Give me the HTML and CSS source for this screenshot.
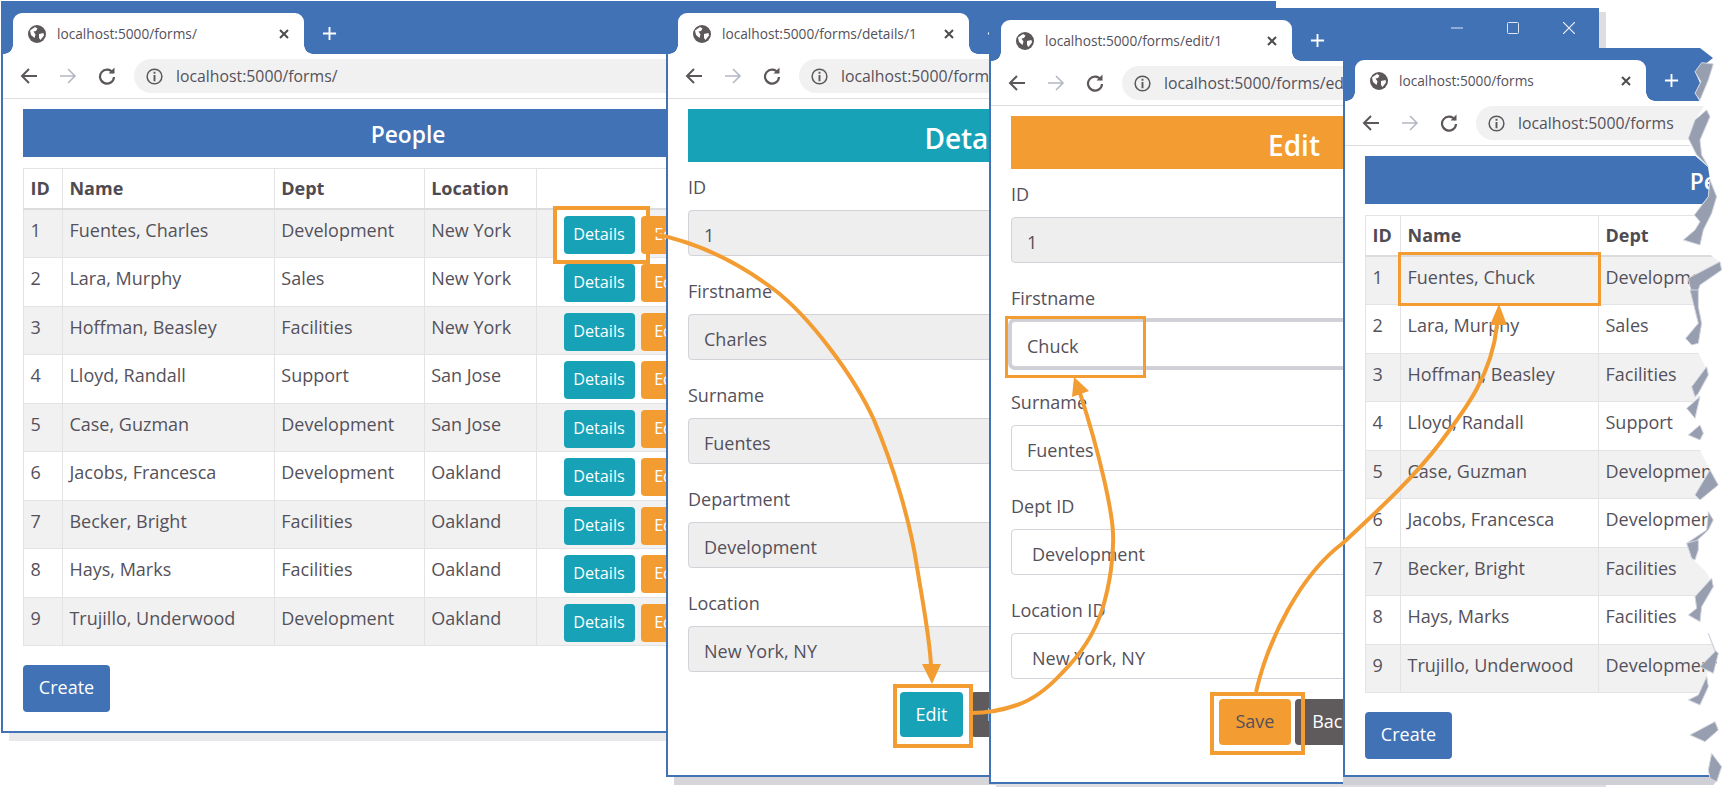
FILE: index.html
```html
<!DOCTYPE html>
<html lang="en">
<head>
<meta charset="utf-8"/>
<title>Forms</title>
<link rel="stylesheet" href="styles.css">
</head>
<body>

<svg class="defs" width="0" height="0">
  <symbol id="globe" viewBox="0 0 18 18">
    <circle cx="9" cy="9" r="9" fill="#5c5759"/>
    <path d="M2 5.5 L7 2 L9.5 3.5 L8 6 L5.5 6.5 L7.5 9.5 L6.5 13 L3 10 Z M11 9 L15.5 8 L16 10.5 L12.5 15 L11 13 Z" fill="#fff"/>
  </symbol>
  <symbol id="back" viewBox="0 0 18 18">
    <path d="M17 9 H2 M9 2 L2 9 L9 16" fill="none" stroke="#5c5759" stroke-width="2"/>
  </symbol>
  <symbol id="forward" viewBox="0 0 18 18">
    <path d="M1 9 H16 M9 2 L16 9 L9 16" fill="none" stroke="#b4b8c2" stroke-width="1.6"/>
  </symbol>
  <symbol id="reload" viewBox="0 0 18 18">
    <path d="M15 6 A7 7 0 1 0 16 10" fill="none" stroke="#5c5759" stroke-width="2.2"/>
    <path d="M10.5 6.5 H16.5 V0.5 Z" fill="#5c5759"/>
  </symbol>
  <symbol id="info" viewBox="0 0 18 18">
    <circle cx="9" cy="9" r="7.8" fill="none" stroke="#5c5759" stroke-width="1.6"/>
    <path d="M9 7.5 V14 M9 4 V6" fill="none" stroke="#5c5759" stroke-width="2"/>
  </symbol>
  <symbol id="close" viewBox="0 0 12 12">
    <path d="M2 2 L10 10 M10 2 L2 10" fill="none" stroke="#4f4b4e" stroke-width="2"/>
  </symbol>
  <symbol id="plus" viewBox="0 0 16 16">
    <path d="M8 1 V15 M1 8 H15" fill="none" stroke="#fff" stroke-width="2"/>
  </symbol>
</svg>

<!-- list -->
<section class="win win1">
  <div class="tabbar">
    <div class="tab">
      <svg class="ico-globe"><use href="#globe"/></svg>
      <span class="tab-title">localhost:5000/forms/</span>
      <svg class="ico-close"><use href="#close"/></svg>
    </div>
    <svg class="ico-plus"><use href="#plus"/></svg>
  </div>
  <div class="toolbar">
    <svg class="ico-nav"><use href="#back"/></svg>
    <svg class="ico-nav"><use href="#forward"/></svg>
    <svg class="ico-nav"><use href="#reload"/></svg>
    <div class="address">
      <svg class="ico-info"><use href="#info"/></svg>
      <span>localhost:5000/forms/</span>
    </div>
  </div>
  <div class="page">
    <h3 class="banner banner-blue">People</h3>
    <table class="people cols-wide">
      <thead>
        <tr><th class="c-id">ID</th><th class="c-name">Name</th><th class="c-dept">Dept</th><th class="c-loc">Location</th><th class="c-act"></th></tr>
      </thead>
      <tbody>
        <tr><td>1</td><td>Fuentes, Charles</td><td>Development</td><td>New York</td><td class="actions"><div class="btn-row"><a class="btn btn-info">Details</a><a class="btn btn-warn">Edit</a></div></td></tr>
        <tr><td>2</td><td>Lara, Murphy</td><td>Sales</td><td>New York</td><td class="actions"><div class="btn-row"><a class="btn btn-info">Details</a><a class="btn btn-warn">Edit</a></div></td></tr>
        <tr><td>3</td><td>Hoffman, Beasley</td><td>Facilities</td><td>New York</td><td class="actions"><div class="btn-row"><a class="btn btn-info">Details</a><a class="btn btn-warn">Edit</a></div></td></tr>
        <tr><td>4</td><td>Lloyd, Randall</td><td>Support</td><td>San Jose</td><td class="actions"><div class="btn-row"><a class="btn btn-info">Details</a><a class="btn btn-warn">Edit</a></div></td></tr>
        <tr><td>5</td><td>Case, Guzman</td><td>Development</td><td>San Jose</td><td class="actions"><div class="btn-row"><a class="btn btn-info">Details</a><a class="btn btn-warn">Edit</a></div></td></tr>
        <tr><td>6</td><td>Jacobs, Francesca</td><td>Development</td><td>Oakland</td><td class="actions"><div class="btn-row"><a class="btn btn-info">Details</a><a class="btn btn-warn">Edit</a></div></td></tr>
        <tr><td>7</td><td>Becker, Bright</td><td>Facilities</td><td>Oakland</td><td class="actions"><div class="btn-row"><a class="btn btn-info">Details</a><a class="btn btn-warn">Edit</a></div></td></tr>
        <tr><td>8</td><td>Hays, Marks</td><td>Facilities</td><td>Oakland</td><td class="actions"><div class="btn-row"><a class="btn btn-info">Details</a><a class="btn btn-warn">Edit</a></div></td></tr>
        <tr><td>9</td><td>Trujillo, Underwood</td><td>Development</td><td>Oakland</td><td class="actions"><div class="btn-row"><a class="btn btn-info">Details</a><a class="btn btn-warn">Edit</a></div></td></tr>
      </tbody>
    </table>
    <a class="btn btn-primary btn-create">Create</a>
  </div>
  <div class="mark mark-details"></div>
</section>

<!-- details -->
<section class="win win2">
  <div class="tabbar">
    <div class="tab">
      <svg class="ico-globe"><use href="#globe"/></svg>
      <span class="tab-title">localhost:5000/forms/details/1</span>
      <svg class="ico-close"><use href="#close"/></svg>
    </div>
    <svg class="ico-plus"><use href="#plus"/></svg>
  </div>
  <div class="toolbar">
    <svg class="ico-nav"><use href="#back"/></svg>
    <svg class="ico-nav"><use href="#forward"/></svg>
    <svg class="ico-nav"><use href="#reload"/></svg>
    <div class="address">
      <svg class="ico-info"><use href="#info"/></svg>
      <span>localhost:5000/forms/details/1</span>
    </div>
  </div>
  <div class="page">
    <h3 class="banner banner-tall banner-teal">Details</h3>
    <form class="form">
      <label>ID</label><input class="field" readonly value="1"/>
      <label>Firstname</label><input class="field" readonly value="Charles"/>
      <label>Surname</label><input class="field" readonly value="Fuentes"/>
      <label>Department</label><input class="field" readonly value="Development"/>
      <label>Location</label><input class="field" readonly value="New York, NY"/>
      <div class="form-actions gap-wide">
        <a class="btn btn-big btn-info btn-edit">Edit</a>
        <a class="btn btn-big btn-dark btn-back">Back</a>
      </div>
    </form>
  </div>
  <div class="mark mark-edit"></div>
</section>

<!-- edit -->
<section class="win win3">
  <div class="tabbar">
    <div class="tab">
      <svg class="ico-globe"><use href="#globe"/></svg>
      <span class="tab-title">localhost:5000/forms/edit/1</span>
      <svg class="ico-close"><use href="#close"/></svg>
    </div>
    <svg class="ico-plus"><use href="#plus"/></svg>
    <div class="controls">
      <span class="ctl"><svg width="12" height="12"><path d="M0 6 H12" stroke="#dfe6f2" stroke-width="1"/></svg></span>
      <span class="ctl"><svg width="12" height="12"><rect x="0.5" y="0.5" width="11" height="11" rx="1" fill="none" stroke="#dfe6f2"/></svg></span>
      <span class="ctl"><svg width="12" height="12"><path d="M0 0 L12 12 M12 0 L0 12" stroke="#eef2f8" stroke-width="1.2"/></svg></span>
    </div>
  </div>
  <div class="toolbar">
    <svg class="ico-nav"><use href="#back"/></svg>
    <svg class="ico-nav"><use href="#forward"/></svg>
    <svg class="ico-nav"><use href="#reload"/></svg>
    <div class="address">
      <svg class="ico-info"><use href="#info"/></svg>
      <span>localhost:5000/forms/edit/1</span>
    </div>
  </div>
  <div class="page">
    <h3 class="banner banner-tall banner-orange">Edit</h3>
    <form class="form">
      <label>ID</label><input class="field" readonly value="1"/>
      <label>Firstname</label><input class="field field-open field-focus" value="Chuck"/>
      <label>Surname</label><input class="field field-open" value="Fuentes"/>
      <label>Dept ID</label><input class="field field-open field-select" value="Development"/>
      <label>Location ID</label><input class="field field-open field-select" value="New York, NY"/>
      <div class="form-actions">
        <a class="btn btn-big btn-warn btn-save">Save</a>
        <a class="btn btn-big btn-dark btn-back2">Back</a>
      </div>
    </form>
  </div>
  <div class="mark mark-chuck"></div>
  <div class="mark mark-save"></div>
</section>

<!-- list again -->
<section class="win win4">
  <div class="tabbar">
    <div class="tab">
      <svg class="ico-globe"><use href="#globe"/></svg>
      <span class="tab-title">localhost:5000/forms</span>
      <svg class="ico-close"><use href="#close"/></svg>
    </div>
    <svg class="ico-plus"><use href="#plus"/></svg>
  </div>
  <div class="toolbar">
    <svg class="ico-nav"><use href="#back"/></svg>
    <svg class="ico-nav"><use href="#forward"/></svg>
    <svg class="ico-nav"><use href="#reload"/></svg>
    <div class="address">
      <svg class="ico-info"><use href="#info"/></svg>
      <span>localhost:5000/forms</span>
    </div>
  </div>
  <div class="page">
    <h3 class="banner banner-blue">People</h3>
    <table class="people cols-narrow">
      <thead>
        <tr><th class="c-id">ID</th><th class="c-name">Name</th><th class="c-dept">Dept</th></tr>
      </thead>
      <tbody>
        <tr><td>1</td><td>Fuentes, Chuck</td><td>Development</td></tr>
        <tr><td>2</td><td>Lara, Murphy</td><td>Sales</td></tr>
        <tr><td>3</td><td>Hoffman, Beasley</td><td>Facilities</td></tr>
        <tr><td>4</td><td>Lloyd, Randall</td><td>Support</td></tr>
        <tr><td>5</td><td>Case, Guzman</td><td>Development</td></tr>
        <tr><td>6</td><td>Jacobs, Francesca</td><td>Development</td></tr>
        <tr><td>7</td><td>Becker, Bright</td><td>Facilities</td></tr>
        <tr><td>8</td><td>Hays, Marks</td><td>Facilities</td></tr>
        <tr><td>9</td><td>Trujillo, Underwood</td><td>Development</td></tr>
      </tbody>
    </table>
    <a class="btn btn-primary btn-create">Create</a>
  </div>
  <div class="mark mark-fuentes"></div>
</section>

<!-- callout arrows and torn right edge, drawn over the windows -->
<svg class="overlay" viewBox="0 0 1725 787">
  <g fill="none" stroke="#f39c32" stroke-width="4">
    <path d="M649 233 C695 241 737 262 772 288 C810 316 855 378 874 420 C893 465 910 520 917 567 C924 610 930 640 931 666"/>
    <path d="M971 713 C985 713 1000 711 1017 705 C1035 699 1050 686 1062 673 C1080 655 1095 632 1102 610 C1110 585 1114 555 1113 533 C1112 510 1100 455 1080 393"/>
    <path d="M1256 692 C1268 640 1300 575 1343 543 C1375 513 1412 480 1440 443 C1465 410 1492 375 1497 325"/>
  </g>
  <g fill="#f39c32">
    <polygon points="922,664 941,664 932,684"/>
    <polygon points="1074,377 1072,397 1089,391"/>
    <polygon points="1499,304 1490,325 1507,325"/>
  </g>
  <polygon fill="#fff" points="1700,48 1725,48 1725,787 1712,787 1717,780 1720,767 1712,753 1708,743 1690,735 1715,723 1700,707 1690,700 1708,683 1707,673 1717,663 1715,652 1707,633 1700,622 1688,615 1697,608 1695,597 1712,583 1707,573 1692,558 1687,545 1707,530 1708,513 1697,497 1717,485 1710,470 1700,450 1688,435 1695,418 1687,408 1700,397 1692,385 1707,370 1703,362 1698,352 1687,338 1700,323 1695,310 1690,290 1695,298 1688,287 1695,277 1720,262 1713,257 1700,245 1683,240 1700,230 1695,213 1708,197 1710,180 1708,167 1692,153 1688,137 1695,120 1705,105 1700,102 1695,93 1700,83 1695,72 1713,58"/>
  <g class="torn" transform="translate(1645 40) scale(.3333)">
    <polygon points="150,95 170,68 205,72 190,120 165,180 150,160 168,125"/>
    <polygon points="185,210 195,230 165,300 170,345 190,380 155,345 130,295 150,240"/>
    <polygon points="195,420 215,470 200,520 175,570 165,615 115,600 150,570 165,545 148,525 190,470"/>
    <polygon points="225,665 230,690 165,735 150,780 135,740 130,715"/>
  </g>
  <g class="torn" transform="translate(1645 290) scale(.3333)">
    <polygon points="135,0 160,0 160,50 170,100 160,160 140,165 122,145 160,100"/>
    <polygon points="185,230 190,255 160,310 150,320 140,290"/>
    <polygon points="165,320 150,385 125,355"/>
    <polygon points="165,405 175,430 165,450 130,435"/>
    <polygon points="195,540 220,585 165,630 150,615"/>
    <polygon points="190,665 205,690 190,720 130,775 125,760 185,720"/>
  </g>
  <g class="torn" transform="translate(1645 540) scale(.3333)">
    <polygon points="125,10 160,0 160,30 150,60 140,55"/>
    <polygon points="200,115 205,140 170,200 165,245 130,225 155,205 150,170"/>
    <polygon points="190,280 210,330 220,340 205,400 165,380 210,335"/>
    <polygon points="185,410 190,440 165,495 130,480 160,465"/>
    <polygon points="210,545 220,570 180,605 135,585"/>
    <polygon points="200,640 230,680 215,725 195,715 190,690"/>
  </g>
</svg>

</body>
</html>
```

FILE: styles.css
```css
html, body {
    margin: 0;
    height: 100%;
    overflow: hidden;
    background: #fff;
}
body {
    position: relative;
    font-family: "Open Sans", "Noto Sans", sans-serif;
    font-size: 18px;
    color: #55515a;
}
.defs {
    position: absolute;
}

/* windows */
.win {
    position: absolute;
    box-sizing: border-box;
    border: 2px solid #4172b5;
    background: #fff;
}
.win1 { z-index: 1; left: 1px; top: 1px; width: 814px; height: 732px; box-shadow: 8px 8px 0 #e8e8ea; }
.win2 { z-index: 2; left: 666px; top: 1px; width: 610px; height: 776px; box-shadow: 8px 8px 0 #d6d6da; }
.win3 { z-index: 3; left: 989px; top: 8px; width: 610px; height: 776px; box-shadow: 7px 4px 0 #dedee2; }
.win4 { z-index: 4; left: 1343px; top: 48px; width: 768px; height: 729px; box-shadow: 0 8px 0 #cfd0d6; }

/* browser chrome */
.tabbar {
    display: flex;
    align-items: flex-end;
    height: 51px;
    padding-left: 10px;
    background: #4172b5;
}
.tab {
    position: relative;
    display: flex;
    align-items: center;
    box-sizing: border-box;
    width: 291px;
    height: 41px;
    padding: 0 14px 0 15px;
    background: #fff;
    border-radius: 9px 9px 0 0;
}
.tab::before, .tab::after {
    content: "";
    position: absolute;
    bottom: 0;
    width: 9px;
    height: 9px;
}
.tab::before {
    left: -9px;
    background: radial-gradient(circle at 0 0, #4172b5 8.5px, #fff 9px);
}
.tab::after {
    right: -9px;
    background: radial-gradient(circle at 100% 0, #4172b5 8.5px, #fff 9px);
}
.ico-globe {
    width: 18px;
    height: 18px;
    flex: none;
}
.tab-title {
    flex: 1;
    margin-left: 11px;
    font-size: 13.7px;
    white-space: nowrap;
    overflow: hidden;
}
.ico-close {
    width: 12px;
    height: 12px;
    flex: none;
}
.ico-plus {
    width: 15px;
    height: 15px;
    margin: 0 0 13px 18px;
    flex: none;
}
.controls {
    display: flex;
    align-self: flex-start;
    margin-left: auto;
    padding-top: 12px;
}
.ctl {
    display: flex;
    justify-content: center;
    width: 56px;
}
.toolbar {
    display: flex;
    align-items: center;
    box-sizing: border-box;
    height: 45px;
    padding-left: 17px;
    border-bottom: 1px solid #dedede;
}
.ico-nav {
    width: 18px;
    height: 18px;
    margin-right: 21px;
    flex: none;
}
.address {
    display: flex;
    align-items: center;
    flex: 1;
    height: 34px;
    margin-left: -3px;
    padding-left: 12px;
    border-radius: 17px 0 0 17px;
    background: #f1f1f2;
    font-size: 15.8px;
    white-space: nowrap;
}
.ico-info {
    width: 17px;
    height: 17px;
    margin-right: 13px;
    flex: none;
}

/* page content */
.page {
    padding: 10px 20px;
}
.banner {
    margin: 0;
    text-align: center;
    color: #fff;
    font-weight: 600;
    font-size: 22.8px;
    height: 48px;
    line-height: 52px;
}
.banner-tall {
    height: 53px;
    font-size: 28px;
    line-height: 58px;
}
.banner-blue { background: #4172b5; }
.banner-teal { background: #17a2b8; }
.banner-orange { background: #f39c32; }

.people {
    table-layout: fixed;
    border-collapse: collapse;
    margin-top: 11px;
}
.cols-wide .c-id { width: 39px; }
.cols-wide .c-name { width: 212px; }
.cols-wide .c-dept { width: 150px; }
.cols-wide .c-loc { width: 112px; }
.cols-wide .c-act { width: 257px; }
.cols-narrow .c-id { width: 35px; }
.cols-narrow .c-name { width: 198px; }
.cols-narrow .c-dept { width: 300px; }

.people th, .people td {
    padding: 7px 6.5px;
    border: 1px solid #e3e3e6;
    text-align: left;
    vertical-align: top;
    line-height: 26px;
    white-space: nowrap;
}
.people th {
    height: 40px;
    box-sizing: border-box;
    padding-top: 6px;
    font-weight: 700;
    color: #4f4b52;
    border-bottom: 2px solid #dcdcdf;
}
.people td {
    height: 48.5px;
    box-sizing: border-box;
}
.people tbody tr:nth-child(odd) {
    background: #f1f1f2;
}
.people td.actions {
    padding: 6px 0 0 27px;
}
.btn-row {
    display: flex;
    gap: 6px;
}

/* buttons */
.btn {
    display: inline-block;
    box-sizing: border-box;
    height: 38px;
    border-radius: 4px;
    color: #fff;
    font-size: 16.2px;
    line-height: 37px;
    text-align: center;
}
.actions .btn {
    position: relative;
    z-index: 3;
}
.actions .btn-info { width: 71px; }
.actions .btn-warn { width: 56px; }
.btn-info { background: #17a2b8; }
.btn-warn { background: #f39c32; }
.btn-dark { background: #5f5a5c; }
.btn-primary { background: #4172b5; }
.btn-create {
    width: 87px;
    height: 47px;
    margin-top: 19px;
    font-size: 18px;
    line-height: 45px;
}
.btn-big {
    height: 45px;
    font-size: 18px;
    line-height: 44px;
}
.btn-edit { width: 63px; }
.btn-back { width: 71px; }
.btn-save { width: 72px; height: 46px; color: #55515a; }
.btn-back2 { width: 74px; height: 46px; }

/* forms */
.form {
    display: flex;
    flex-direction: column;
    margin-top: 11px;
}
.form label {
    height: 28px;
    margin-bottom: 9px;
    line-height: 28px;
}
.field {
    box-sizing: border-box;
    width: 100%;
    height: 46px;
    margin: 0 0 21px;
    padding: 4px 15px 0;
    border: 1px solid #d2d2d8;
    border-radius: 4px;
    background: #eeeeef;
    font: inherit;
    color: #55515a;
    outline: none;
}
.field-open { background: #fff; }
.field-focus { box-shadow: 0 0 0 3px #cfd0d6; }
.field-select { padding-left: 20px; }
.form-actions {
    display: flex;
    justify-content: center;
    gap: 4px;
    margin-top: -1px;
}
.gap-wide { gap: 8px; }

/* orange callout boxes */
.mark {
    position: absolute;
    box-sizing: border-box;
    border: 4px solid #f39c32;
}
.mark-details { left: 550px; top: 203px; width: 97px; height: 58px; background: #fff; z-index: 2; }
.mark-edit { left: 225px; top: 681px; width: 80px; height: 64px; }
.mark-chuck { left: 14px; top: 306px; width: 141px; height: 62px; border-width: 3px; }
.mark-save { left: 219px; top: 682px; width: 95px; height: 63px; }
.mark-fuentes { left: 53px; top: 202px; width: 203px; height: 54px; border-width: 3px; }

.overlay {
    position: absolute;
    z-index: 5;
    left: 0;
    top: 0;
    width: 1725px;
    height: 787px;
    pointer-events: none;
}
.torn polygon {
    fill: #979eb0;
    stroke: #d3d6de;
    stroke-width: 3;
}
```
